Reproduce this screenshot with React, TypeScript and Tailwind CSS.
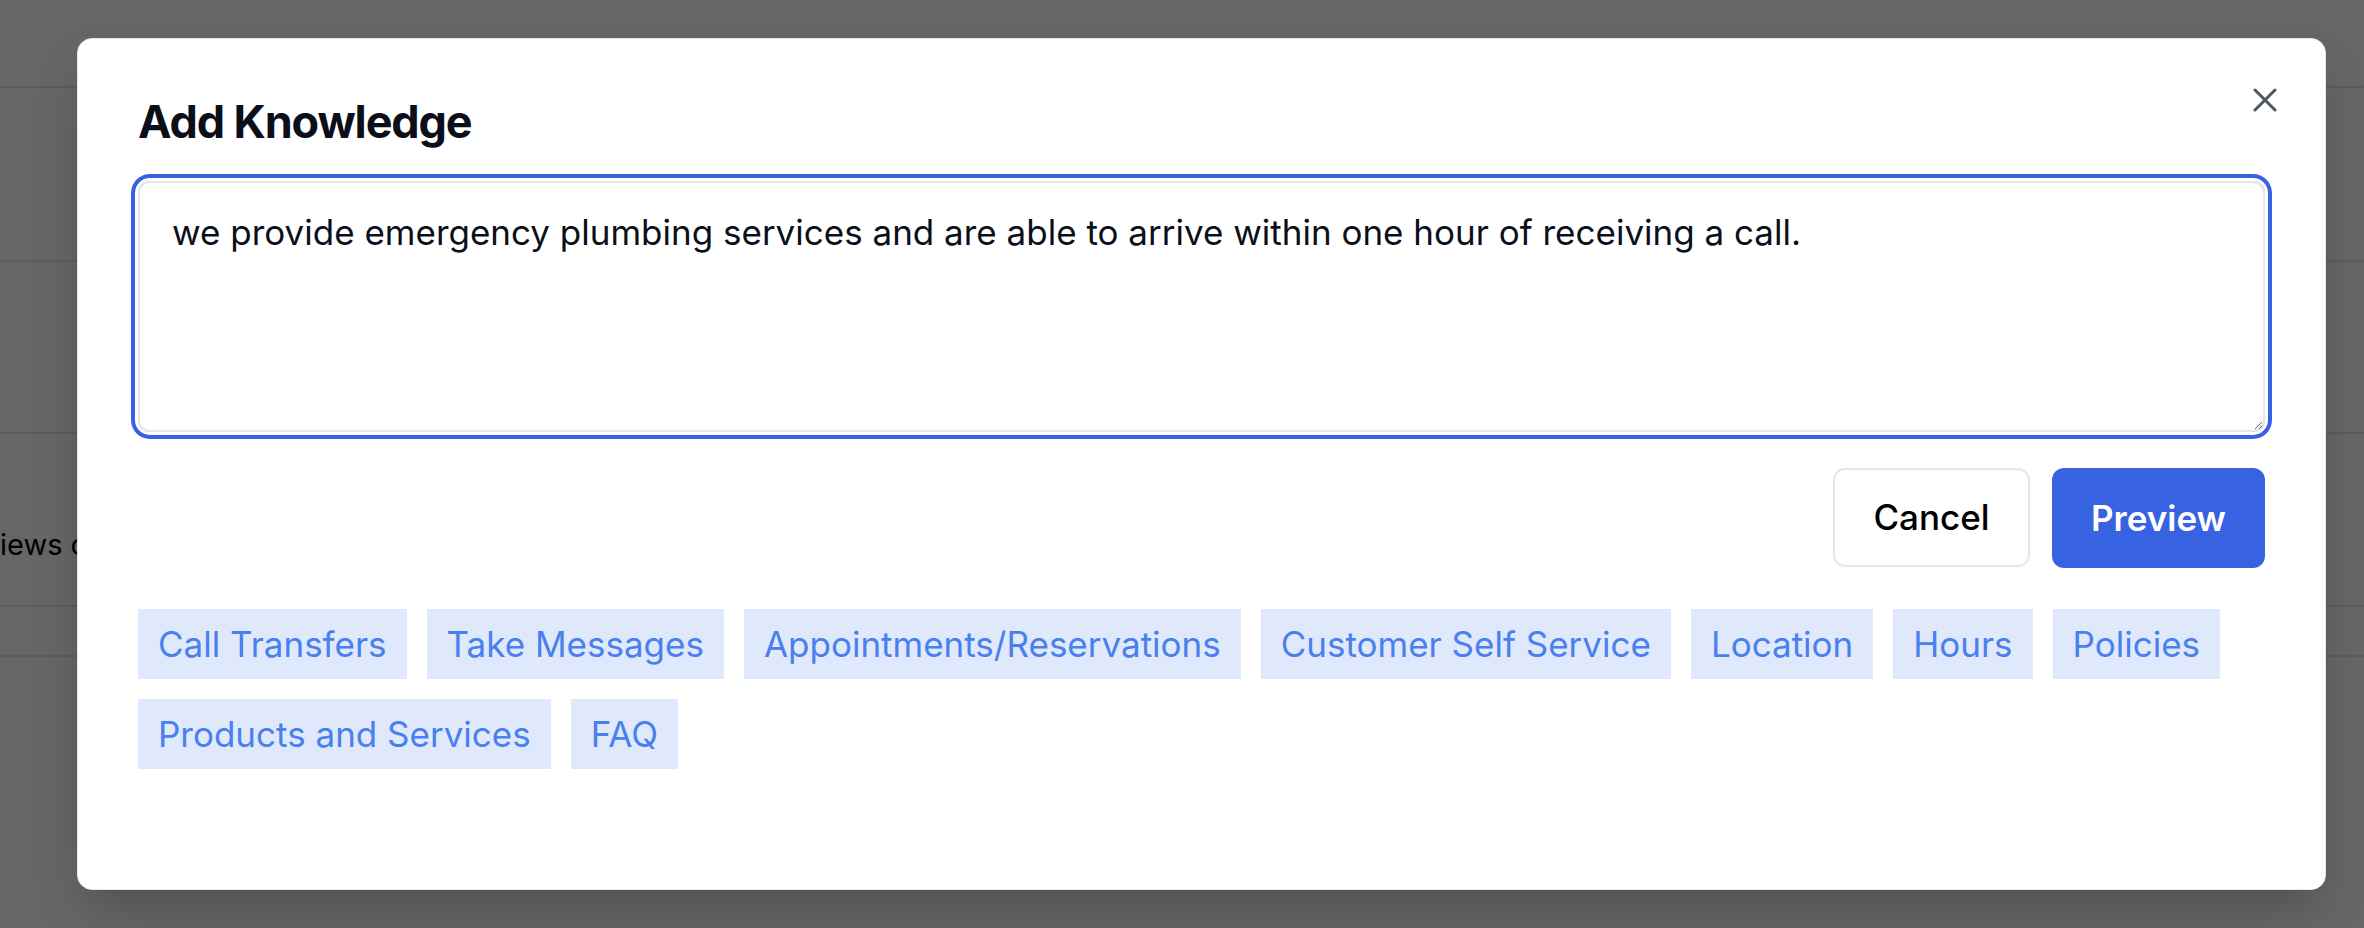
const tags = [
  "Call Transfers",
  "Take Messages",
  "Appointments/Reservations",
  "Customer Self Service",
  "Location",
  "Hours",
  "Policies",
  "Products and Services",
  "FAQ",
];

export default function App() {
  return (
    <div className="relative h-[928px] w-full overflow-hidden bg-white font-['Inter',sans-serif]">
      {/* page behind the dialog */}
      <div className="flex flex-col">
        <div className="h-[88px] border-b-2 border-gray-200" />
        <div className="h-[174px] border-b-2 border-gray-200" />
        <div className="h-[172px] border-b-2 border-gray-200" />
        <div className="flex h-[173px] items-center border-b-2 border-gray-200 pt-[50px] text-[29px] text-black">
          iews of our customers
        </div>
        <div className="h-[50px] border-b-2 border-gray-200" />
      </div>

      <div className="absolute inset-0 bg-black/60" />

      {/* dialog */}
      <div className="absolute left-[77px] top-[38px] h-[852px] w-[2249px] rounded-[15px] border border-gray-200 bg-white px-[60px] pt-[56px] shadow-2xl">
        <button className="absolute right-[48px] top-[49px] text-[#4b5563]">
          <svg width="24" height="24" viewBox="0 0 24 24" fill="none">
            <path
              d="M2 2L22 22M22 2L2 22"
              stroke="currentColor"
              strokeWidth="3"
              strokeLinecap="round"
            />
          </svg>
        </button>

        <h2 className="text-[45px] leading-[54px] font-bold tracking-tight text-[#0b0f1a]">
          Add Knowledge
        </h2>

        <textarea
          className="mt-[32px] block h-[251px] w-full rounded-[12px] border-2 border-gray-200 px-[32px] pt-[22px] text-[35px] leading-[54px] text-[#0b0f1a] outline-none ring-[4px] ring-[#3763e3] ring-offset-[3px] ring-offset-white"
          defaultValue="we provide emergency plumbing services and are able to arrive within one hour of receiving a call."
        />

        <div className="mt-[36px] flex justify-end gap-[22px]">
          <button className="h-[99px] w-[197px] rounded-[12px] border-2 border-gray-200 bg-white text-[35px] font-medium text-black">
            Cancel
          </button>
          <button className="h-[100px] w-[213px] rounded-[12px] bg-[#3763e3] text-[35px] font-semibold text-white">
            Preview
          </button>
        </div>

        <div className="mt-[41px] flex flex-wrap gap-[20px]">
          {tags.map((tag) => (
            <span
              key={tag}
              className="flex h-[70px] items-center bg-[#dfe9fb] px-[20px] text-[35px] text-[#4a80ee]"
            >
              {tag}
            </span>
          ))}
        </div>
      </div>
    </div>
  );
}
